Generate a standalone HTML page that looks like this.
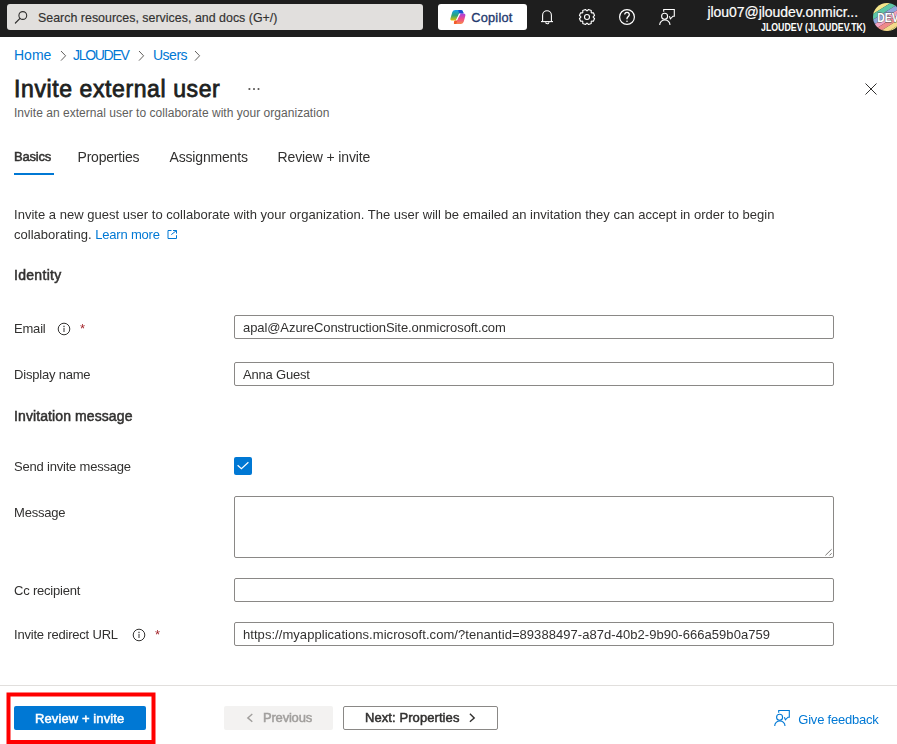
<!DOCTYPE html>
<html><head><meta charset="utf-8">
<style>
*{box-sizing:border-box;margin:0;padding:0}
html,body{width:897px;height:744px;overflow:hidden;background:#fff;font-family:"Liberation Sans",sans-serif;color:#323130}
.abs{position:absolute;white-space:nowrap}
svg.abs{overflow:visible}
#hdr{position:absolute;left:0;top:0;width:897px;height:37px;background:#1e1e1e;overflow:hidden}
#search{position:absolute;left:7px;top:4px;width:416px;height:26px;background:#e1dfdd;border-radius:3px}
#copilot{position:absolute;left:438px;top:4px;width:89px;height:26px;background:#fff;border-radius:3px}
.lbl{position:absolute;left:14px;font-size:13px;line-height:16px;color:#323130;white-space:nowrap;letter-spacing:-0.2px}
.h2{position:absolute;left:14px;font-size:14px;line-height:17px;color:#323130;white-space:nowrap;-webkit-text-stroke:0.5px #323130}
.inp{position:absolute;left:234px;width:600px;height:24px;border:1px solid #8a8886;border-radius:2px;background:#fff}
.inp span{position:absolute;left:8px;top:4px;font-size:13px;line-height:16px;white-space:nowrap;color:#323130;letter-spacing:-0.08px}
.link{color:#0078d4}
.tab{position:absolute;top:149px;font-size:14px;line-height:16px;color:#323130;white-space:nowrap}
.ast{position:absolute;font-size:13px;line-height:13px;color:#a4262c}
</style></head><body>
<div id="hdr">
  <div id="search">
    <svg class="abs" style="left:0;top:0" width="30" height="26" viewBox="7 4 30 26"><circle cx="22.8" cy="15.5" r="3.9" fill="none" stroke="#323130" stroke-width="1.1"/><line x1="20" y1="18.4" x2="15.4" y2="23" stroke="#323130" stroke-width="1.2" stroke-linecap="round"/></svg>
    <div class="abs" style="left:31px;top:7px;font-size:12.4px;line-height:15px;color:#323130;letter-spacing:0.02px;-webkit-text-stroke:0.15px #323130">Search resources, services, and docs (G+/)</div>
  </div>
  <div id="copilot">
    <svg class="abs" style="left:12px;top:6px" width="16" height="14" viewBox="0 0 16 14">
      <defs>
        <linearGradient id="gl" x1="0" y1="0" x2="0" y2="1"><stop offset="0" stop-color="#119ff0"/><stop offset="0.5" stop-color="#2aa37a"/><stop offset="1" stop-color="#e8c400"/></linearGradient>
        <linearGradient id="gr" x1="0" y1="0" x2="0" y2="1"><stop offset="0" stop-color="#a23fe6"/><stop offset="0.5" stop-color="#ee4a8c"/><stop offset="1" stop-color="#f7894a"/></linearGradient>
      </defs>
      <path d="M2.3 2 Q3 0 5.3 0 L11 0 Q12.6 0 13.2 2.2 L13.4 3.4 L10.2 3.4 Q9 3.4 8.6 4.6 L6.6 10.6 L1.6 10.6 Q0 10.6 0.4 8.8 Z" fill="url(#gl)"/>
      <path d="M8.2 0 L11 0 Q12.6 0 13.2 2.2 L13.4 3.4 L9.2 3.4 Z" fill="#1b4fd0"/>
      <path d="M13.6 3.4 Q15.8 3.4 15.4 5.4 L13.8 11.6 Q13.2 14 11 14 L5 14 Q3.4 14 3.9 12.4 L4.4 11 Q4.9 10.4 6.4 10.4 L7 10.4 L9 4.4 Q9.3 3.4 10.6 3.4 Z" fill="url(#gr)"/>
      <path d="M4 12.4 L4.4 11 Q4.9 10.4 6.4 10.4 L7.4 10.4 L6.2 14 L5 14 Q3.4 14 4 12.4 Z" fill="#f25a2a"/>
      <path d="M10 3.6 L6.4 10.2" stroke="#fff" stroke-width="1.1" fill="none"/>
    </svg>
    <div class="abs" style="left:33.3px;top:4.8px;font-size:12.8px;line-height:17px;color:#243a6e;letter-spacing:0.2px;-webkit-text-stroke:0.35px #243a6e">Copilot</div>
  </div>
  <svg class="abs" style="left:536px;top:5px" width="24" height="24" viewBox="0 0 24 24" fill="none" stroke="#fff" stroke-width="1.1">
    <path d="M6.6 16.4 V10.2 A4.4 4.4 0 0 1 15.4 10.2 V16.4"/><path d="M5 16.6 H17"/><path d="M9.7 17.2 A1.6 1.6 0 0 0 12.9 17.2"/>
  </svg>
  <svg class="abs" style="left:575px;top:5px" width="24" height="24" viewBox="0 0 24 24" fill="none" stroke="#fff" stroke-width="1.1">
    <path stroke-linejoin="round" d="M12.33 5.81 L13.47 4.44 L16.30 5.61 L16.15 7.39 L16.61 7.85 L18.39 7.70 L19.56 10.53 L18.19 11.67 L18.19 12.33 L19.56 13.47 L18.39 16.30 L16.61 16.15 L16.15 16.61 L16.30 18.39 L13.47 19.56 L12.33 18.19 L11.67 18.19 L10.53 19.56 L7.70 18.39 L7.85 16.61 L7.39 16.15 L5.61 16.30 L4.44 13.47 L5.81 12.33 L5.81 11.67 L4.44 10.53 L5.61 7.70 L7.39 7.85 L7.85 7.39 L7.70 5.61 L10.53 4.44 L11.67 5.81Z"/>
    <circle cx="12" cy="12" r="2.5"/>
  </svg>
  <svg class="abs" style="left:615px;top:5px" width="24" height="24" viewBox="0 0 24 24" fill="none" stroke="#fff" stroke-width="1.2">
    <circle cx="12" cy="12" r="7.4"/>
    <path d="M9.7 9.6 A2.3 2.3 0 1 1 13.2 11.6 Q12 12.4 12 13.6 V14.3" stroke-width="1.3"/>
    <circle cx="12" cy="16.3" r="0.8" fill="#fff" stroke="none"/>
  </svg>
  <svg class="abs" style="left:655px;top:5px" width="24" height="24" viewBox="0 0 24 24" fill="none" stroke="#fff" stroke-width="1.1">
    <path d="M8.7 6.8 V4.5 H19.3 V11.2 H18 L15.4 13.8 L14.4 11.2"/>
    <circle cx="9.6" cy="11.3" r="3"/>
    <path d="M4.7 20 A5.15 5.15 0 0 1 15 20"/>
  </svg>
  <div class="abs" style="left:707.5px;top:3.5px;font-size:14px;line-height:17px;color:#fff;letter-spacing:-0.05px;-webkit-text-stroke:0.2px #fff">jlou07@jloudev.onmicr...</div>
  <div class="abs" style="left:761px;top:20.5px;font-size:11px;line-height:13px;font-weight:bold;color:#fff;transform:scaleX(0.8);transform-origin:0 0">JLOUDEV (JLOUDEV.TK)</div>
  <svg class="abs" style="left:873px;top:3px" width="28" height="28" viewBox="0 0 28 28">
    <defs><clipPath id="av"><circle cx="14" cy="14" r="14"/></clipPath></defs>
    <g clip-path="url(#av)"><g transform="rotate(-32 14 14)">
      <rect x="-10" y="-7" width="48" height="11" fill="#f3e58a"/>
      <rect x="-10" y="4" width="48" height="5" fill="#5dc6a6"/>
      <rect x="-10" y="9" width="48" height="4.5" fill="#8ea6dc"/>
      <rect x="-10" y="13.5" width="48" height="4.5" fill="#f2a3c3"/>
      <rect x="-10" y="18" width="48" height="4.5" fill="#f08a8a"/>
      <rect x="-10" y="22.5" width="48" height="4.5" fill="#f5d98a"/>
      <rect x="-10" y="27" width="48" height="4.5" fill="#eeea8a"/>
      <rect x="-10" y="31.5" width="48" height="14" fill="#5dc6a6"/>
    </g></g>
    <text x="5.4" y="19" font-family="Liberation Sans" font-size="13" font-weight="bold" fill="#fff" stroke="#555" stroke-width="0.9" paint-order="stroke" transform="scale(0.8 1)">DEV</text>
  </svg>
</div>

<div class="abs link" style="left:14px;top:47px;font-size:14px;line-height:17px">Home</div>
<svg class="abs" style="left:59.5px;top:50px" width="7" height="12" viewBox="0 0 7 12"><path d="M1 1 L5.6 5.8 L1 10.6" fill="none" stroke="#605e5c" stroke-width="1"/></svg>
<div class="abs link" style="left:73px;top:47px;font-size:14px;line-height:17px;letter-spacing:-1.3px">JLOUDEV</div>
<svg class="abs" style="left:137.5px;top:50px" width="7" height="12" viewBox="0 0 7 12"><path d="M1 1 L5.6 5.8 L1 10.6" fill="none" stroke="#605e5c" stroke-width="1"/></svg>
<div class="abs link" style="left:153px;top:47px;font-size:14px;line-height:17px;letter-spacing:-0.5px">Users</div>
<svg class="abs" style="left:193.5px;top:50px" width="7" height="12" viewBox="0 0 7 12"><path d="M1 1 L5.6 5.8 L1 10.6" fill="none" stroke="#605e5c" stroke-width="1"/></svg>

<div class="abs" style="left:14px;top:76px;font-size:23px;line-height:27px;color:#201f1e;letter-spacing:0.6px;-webkit-text-stroke:0.8px #201f1e">Invite external user</div>
<svg class="abs" style="left:244px;top:80px" width="20" height="16" viewBox="0 0 20 16" fill="#605e5c"><rect x="4.5" y="8" width="1.8" height="1.9" rx="0.5"/><rect x="9.1" y="8" width="1.8" height="1.9" rx="0.5"/><rect x="13.6" y="8" width="1.8" height="1.9" rx="0.5"/></svg>
<div class="abs" style="left:14px;top:106px;font-size:12px;line-height:15px;color:#605e5c;letter-spacing:0.03px">Invite an external user to collaborate with your organization</div>
<svg class="abs" style="left:865px;top:83px" width="12" height="12" viewBox="0 0 12 12"><path d="M0.5 0.5 L11.5 11.5 M11.5 0.5 L0.5 11.5" stroke="#323130" stroke-width="1"/></svg>

<div style="position:absolute;left:0;top:0;width:897px;height:744px;will-change:transform">
<div class="tab" style="left:14px;font-size:13px;letter-spacing:-0.2px;-webkit-text-stroke:0.5px #323130">Basics</div>
<div class="abs" style="left:14px;top:173px;width:40px;height:2px;background:#0078d4"></div>
<div class="tab" style="left:77.5px;letter-spacing:-0.2px">Properties</div>
<div class="tab" style="left:169.5px;letter-spacing:-0.17px">Assignments</div>
<div class="tab" style="left:277.5px;letter-spacing:-0.12px">Review + invite</div>

<div class="abs" style="left:14px;top:205px;font-size:13px;line-height:20px;letter-spacing:0.02px">Invite a new guest user to collaborate with your organization. The user will be emailed an invitation they can accept in order to begin<br>collaborating. <span class="link" style="letter-spacing:-0.2px">Learn more</span></div>
<svg class="abs" style="left:167px;top:230px" width="10" height="10" viewBox="0 0 10 10" fill="none" stroke="#0078d4" stroke-width="1"><path d="M4.5 0.5 H1 V8.5 H9.5 V5.2 M6 0.5 H9.5 V3.6 M9.5 0.5 L4.3 4.6"/></svg>

<div class="h2" style="top:267px;letter-spacing:0.3px">Identity</div>
<div class="lbl" style="top:321px">Email</div>
<svg class="abs" style="left:57px;top:321.8px" width="14" height="14" viewBox="0 0 14 14" fill="none" stroke="#323130" stroke-width="1"><circle cx="7" cy="7" r="5.8"/><path d="M7 5.8 V10"/><circle cx="7" cy="4.2" r="0.3" fill="#323130"/></svg>
<div class="ast" style="left:80px;top:322px">*</div>
<div class="inp" style="top:315px"><span>apal@AzureConstructionSite.onmicrosoft.com</span></div>
<div class="lbl" style="top:367px">Display name</div>
<div class="inp" style="top:362px"><span style="letter-spacing:-0.2px">Anna Guest</span></div>

<div class="h2" style="top:408px;letter-spacing:0.1px">Invitation message</div>
<div class="lbl" style="top:459px">Send invite message</div>
<div class="abs" style="left:234px;top:457px;width:18px;height:18px;background:#0078d4;border-radius:2px"></div>
<svg class="abs" style="left:234px;top:457px" width="18" height="18" viewBox="0 0 18 18"><path d="M3.6 8.2 L7.4 11.7 L14.4 5.3" fill="none" stroke="#fff" stroke-width="1.2"/></svg>
<div class="lbl" style="top:505px">Message</div>
<div class="inp" style="top:496px;height:62px"></div>
<svg class="abs" style="left:824px;top:548px" width="9" height="9" viewBox="0 0 9 9" fill="none" stroke="#6b6967" stroke-width="0.9"><path d="M1.4 7.4 L7.6 1.3 M5.5 7.4 L7.6 5.3"/></svg>
<div class="lbl" style="top:583px">Cc recipient</div>
<div class="inp" style="top:578px"></div>
<div class="lbl" style="top:627px">Invite redirect URL</div>
<svg class="abs" style="left:131.6px;top:628.3px" width="14" height="14" viewBox="0 0 14 14" fill="none" stroke="#323130" stroke-width="1"><circle cx="7" cy="7" r="5.8"/><path d="M7 5.8 V10"/><circle cx="7" cy="4.2" r="0.3" fill="#323130"/></svg>
<div class="ast" style="left:155px;top:628px">*</div>
<div class="inp" style="top:622px"><span style="letter-spacing:0.05px">https://myapplications.microsoft.com/?tenantid=89388497-a87d-40b2-9b90-666a59b0a759</span></div>

</div>
<div class="abs" style="left:0;top:685px;width:897px;height:1px;background:#e1dfdd"></div>
<svg class="abs" style="left:0;top:680px" width="200" height="64" viewBox="0 680 200 64"><rect x="8.5" y="694.5" width="145" height="47.5" fill="none" stroke="#ff0000" stroke-width="4"/></svg>
<div class="abs" style="left:14px;top:706px;width:132px;height:24px;background:#0078d4;border-radius:2px"></div>
<div class="abs" style="left:35px;top:711px;font-size:13px;line-height:16px;color:#fff;letter-spacing:0.1px;-webkit-text-stroke:0.5px #fff">Review + invite</div>
<div class="abs" style="left:224px;top:706px;width:109px;height:24px;background:#f3f2f1;border-radius:2px"></div>
<svg class="abs" style="left:246px;top:713px" width="8" height="10" viewBox="0 0 8 10"><path d="M6.3 0.9 L1.8 4.9 L6.3 8.8" fill="none" stroke="#a19f9d" stroke-width="1.4"/></svg>
<div class="abs" style="left:263px;top:710px;font-size:13px;line-height:16px;color:#a19f9d;letter-spacing:-0.2px;-webkit-text-stroke:0.5px #a19f9d">Previous</div>
<div class="abs" style="left:343px;top:706px;width:155px;height:24px;border:1px solid #8a8886;border-radius:2px"></div>
<div class="abs" style="left:365px;top:710px;font-size:13px;line-height:16px;color:#323130;letter-spacing:0.08px;-webkit-text-stroke:0.5px #323130">Next: Properties</div>
<svg class="abs" style="left:467.5px;top:712.5px" width="8" height="10" viewBox="0 0 8 10"><path d="M1.9 0.8 L6.2 4.9 L1.9 8.7" fill="none" stroke="#323130" stroke-width="1.4"/></svg>
<svg class="abs" style="left:770px;top:706px" width="24" height="24" viewBox="0 0 24 24" fill="none" stroke="#0078d4" stroke-width="1.1">
  <path d="M8.7 6.8 V4.5 H19.3 V11.2 H18 L15.4 13.8 L14.4 11.2"/>
  <circle cx="9.6" cy="11.3" r="3"/>
  <path d="M4.7 20 A5.15 5.15 0 0 1 15 20"/>
</svg>
<div class="abs link" style="left:798.3px;top:712px;font-size:13px;line-height:16px;letter-spacing:-0.22px">Give feedback</div>
</body></html>
